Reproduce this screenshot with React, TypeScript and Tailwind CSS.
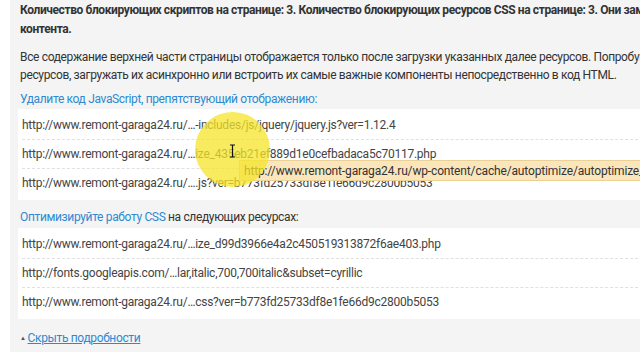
import React from "react";

const jsRows = [
  "http://www.remont-garaga24.ru/…-includes/js/jquery/jquery.js?ver=1.12.4",
  "http://www.remont-garaga24.ru/…ize_435eb21ef889d1e0cefbadaca5c70117.php",
  "http://www.remont-garaga24.ru/….js?ver=b773fd25733df8e1fe66d9c2800b5053",
];

const cssRows = [
  "http://www.remont-garaga24.ru/…ize_d99d3966e4a2c450519313872f6ae403.php",
  "http://fonts.googleapis.com/…lar,italic,700,700italic&subset=cyrillic",
  "http://www.remont-garaga24.ru/…css?ver=b773fd25733df8e1fe66d9c2800b5053",
];

function UrlBox({ rows }: { rows: string[] }) {
  return (
    <div className="bg-white pt-[1px] pb-[3px] pl-[4px] w-[640px]">
      {rows.map((r, i) => (
        <div
          key={i}
          className={
            "h-[29px] flex items-center whitespace-nowrap text-[12px] tracking-[-0.25px] text-[#444] " +
            (i > 0 ? "border-t border-dashed border-[#e0e0e0]" : "")
          }
        >
          {r}
        </div>
      ))}
    </div>
  );
}

export default function App() {
  return (
    <div
      className="relative w-[640px] h-[360px] bg-white overflow-hidden"
      style={{ fontFamily: "Roboto, 'Noto Sans', sans-serif" }}
    >
      <div className="ml-[10px] h-[352px] bg-[#f4f4f4] pl-[10px] text-[#333] whitespace-nowrap overflow-hidden">
        <p className="font-bold text-[12px] tracking-[-0.4px] leading-[19px] pt-[1px]">
          Количество блокирующих скриптов на странице: 3. Количество блокирующих ресурсов CSS на странице: 3. Они замедляют отображение
          <br />
          контента.
        </p>
        <p className="mt-[9px] text-[12px] tracking-[-0.35px] leading-[18px]">
          Все содержание верхней части страницы отображается только после загрузки указанных далее ресурсов. Попробуйте отложить загрузку этих
          <br />
          ресурсов, загружать их асинхронно или встроить их самые важные компоненты непосредственно в код HTML.
        </p>
        <p className="mt-[6px] text-[12px] tracking-[-0.35px] leading-[18px] text-[#2d8ad2]">
          Удалите код JavaScript, препятствующий отображению:
        </p>
        <div className="mt-[1px] -ml-[2px]">
          <UrlBox rows={jsRows} />
        </div>
        <p className="mt-[8px] text-[12px] tracking-[-0.35px] leading-[18px]">
          <span className="text-[#2d8ad2]">Оптимизируйте работу CSS</span> на следующих ресурсах:
        </p>
        <div className="mt-[2px] -ml-[2px]">
          <UrlBox rows={cssRows} />
        </div>
        <p className="mt-[10px] text-[12px] tracking-[-0.35px] leading-[18px] flex items-center gap-[2px]">
          <span className="text-[6px] text-[#555]">▲</span>
          <span className="text-[#2d8ad2] underline">Скрыть подробности</span>
        </p>
      </div>

      {/* tooltip */}
      <div className="absolute left-[239px] top-[160px] h-[21px] pl-[4px] pr-2 flex items-center bg-[#fbe6bb] border border-[#ecd196] text-[12px] tracking-[-0.15px] text-[#333] whitespace-nowrap">
        http://www.remont-garaga24.ru/wp-content/cache/autoptimize/autoptimize_435eb21ef889d1e0cefbadaca5c70117.php
      </div>

      {/* cursor highlight */}
      <div className="absolute left-[195px] top-[112px] w-[75px] h-[75px] rounded-full bg-[#f5e42a] opacity-75" />
      <svg className="absolute left-[229px] top-[144px]" width="7" height="14" viewBox="0 0 7 14">
        <path d="M1 1h5M3.5 1v12M1 13h5" stroke="#111" strokeWidth="1.2" fill="none" />
      </svg>
    </div>
  );
}
